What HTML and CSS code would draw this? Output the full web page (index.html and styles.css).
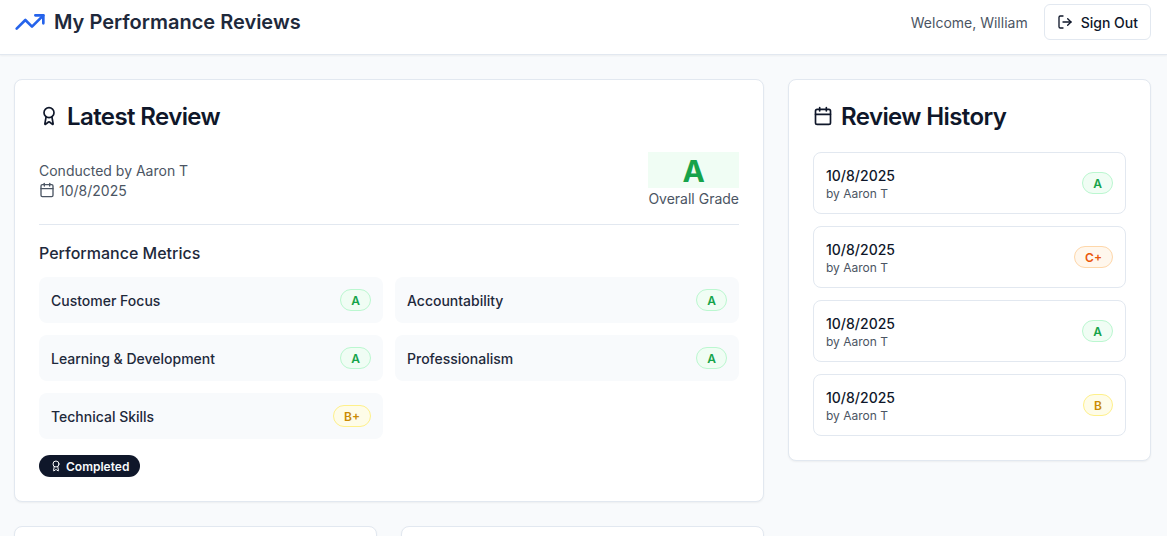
FILE: index.html
```html
<!DOCTYPE html>
<html lang="en">
<head>
<meta charset="utf-8">
<title>My Performance Reviews</title>
<link rel="stylesheet" href="styles.css">
</head>
<body>
<header class="topbar">
  <div class="brand">
    <svg class="ico brand-ico" viewBox="0 0 24 24"><polyline points="22 7 13.5 15.5 8.5 10.5 2 17"/><polyline points="16 7 22 7 22 13"/></svg>
    <h1>My Performance Reviews</h1>
  </div>
  <div class="user">
    <span class="welcome t">Welcome, William</span>
    <button class="signout">
      <svg class="ico i16" viewBox="0 0 24 24"><path d="M9 21H5a2 2 0 0 1-2-2V5a2 2 0 0 1 2-2h4"/><polyline points="16 17 21 12 16 7"/><line x1="21" y1="12" x2="9" y2="12"/></svg>
      <span class="t">Sign Out</span>
    </button>
  </div>
</header>
<main class="layout">
  <div class="primary">
    <section class="card">
      <h2 class="card-title">
        <svg class="ico i20" viewBox="0 0 24 24"><path d="m15.477 12.89 1.515 8.526a.5.5 0 0 1-.81.47l-3.58-2.687a1 1 0 0 0-1.197 0l-3.586 2.686a.5.5 0 0 1-.81-.469l1.514-8.526"/><circle cx="12" cy="8" r="6"/></svg>
        <span class="t">Latest Review</span>
      </h2>
      <div class="summary">
        <div class="meta">
          <div>Conducted by Aaron T</div>
          <div class="meta-date">
            <svg class="ico i16" viewBox="0 0 24 24"><path d="M8 2v4"/><path d="M16 2v4"/><rect x="3" y="4" width="18" height="18" rx="2"/><path d="M3 10h18"/></svg>
            10/8/2025
          </div>
        </div>
        <div class="overall">
          <div class="overall-grade">A</div>
          <div class="overall-label">Overall Grade</div>
        </div>
      </div>
      <h3 class="metrics-title">Performance Metrics</h3>
      <div class="metrics">
        <div class="metric"><span class="t">Customer Focus</span><span class="grade green">A</span></div>
        <div class="metric"><span class="t">Accountability</span><span class="grade green">A</span></div>
        <div class="metric"><span class="t">Learning &amp; Development</span><span class="grade green">A</span></div>
        <div class="metric"><span class="t">Professionalism</span><span class="grade green">A</span></div>
        <div class="metric"><span class="t">Technical Skills</span><span class="grade yellow">B+</span></div>
      </div>
      <span class="status">
        <svg class="ico i12" viewBox="0 0 24 24"><path d="m15.477 12.89 1.515 8.526a.5.5 0 0 1-.81.47l-3.58-2.687a1 1 0 0 0-1.197 0l-3.586 2.686a.5.5 0 0 1-.81-.469l1.514-8.526"/><circle cx="12" cy="8" r="6"/></svg>
        <span class="t">Completed</span>
      </span>
    </section>
    <div class="lower">
      <section class="card card-stub"></section>
      <section class="card card-stub"></section>
    </div>
  </div>
  <aside class="card history">
    <h2 class="card-title">
      <svg class="ico i20" viewBox="0 0 24 24"><path d="M8 2v4"/><path d="M16 2v4"/><rect x="3" y="4" width="18" height="18" rx="2"/><path d="M3 10h18"/></svg>
      <span class="t">Review History</span>
    </h2>
    <div class="history-list">
      <div class="history-item"><div class="t"><div class="h-date">10/8/2025</div><div class="h-by">by Aaron T</div></div><span class="grade green">A</span></div>
      <div class="history-item"><div class="t"><div class="h-date">10/8/2025</div><div class="h-by">by Aaron T</div></div><span class="grade orange">C+</span></div>
      <div class="history-item"><div class="t"><div class="h-date">10/8/2025</div><div class="h-by">by Aaron T</div></div><span class="grade green">A</span></div>
      <div class="history-item"><div class="t"><div class="h-date">10/8/2025</div><div class="h-by">by Aaron T</div></div><span class="grade yellow">B</span></div>
    </div>
  </aside>
</main>
</body>
</html>
```

FILE: styles.css
```css
* { box-sizing: border-box; }
html, body { height: 536px; overflow: hidden; }
body {
  margin: 0;
  background: #f8fafc;
  color: #0f172a;
  font-family: Inter, "Liberation Sans", sans-serif;
  font-size: 14px;
  line-height: 20px;
}
h1, h2, h3 { margin: 0; }
.ico { fill: none; stroke: currentColor; stroke-width: 2; stroke-linecap: round; stroke-linejoin: round; flex: none; display: block; }
.i12 { width: 12px; height: 12px; }
.i16 { width: 16px; height: 16px; }
.i20 { width: 20px; height: 20px; }
.t { padding-top: 2px; }

.topbar {
  height: 55px;
  padding: 4px 16px 14px 14px;
  display: flex;
  justify-content: space-between;
  align-items: center;
  background: #fff;
  border-bottom: 1px solid #e2e8f0;
  box-shadow: 0 1px 2px rgba(0, 0, 0, .05);
}
.brand { display: flex; align-items: center; gap: 8px; }
.brand-ico { width: 32px; height: 32px; color: #2563eb; }
.brand h1 { font-size: 20px; line-height: 28px; font-weight: 600; color: #1e293b; }
.user { display: flex; align-items: center; gap: 16px; }
.welcome { color: #4b5563; }
.signout {
  height: 36px;
  padding: 0 12px;
  display: flex;
  align-items: center;
  gap: 8px;
  font: 500 14px/20px Inter, "Liberation Sans", sans-serif;
  color: #0f172a;
  background: #fff;
  border: 1px solid #e2e8f0;
  border-radius: 6px;
}

.layout {
  padding: 24px 16px 0 14px;
  display: grid;
  grid-template-columns: 750px 363px;
  gap: 24px;
  align-items: start;
}
.primary { display: flex; flex-direction: column; gap: 24px; }
.lower { display: grid; grid-template-columns: 363px 363px; gap: 24px; }
.card {
  background: #fff;
  border: 1px solid #e2e8f0;
  border-radius: 8px;
  box-shadow: 0 1px 2px rgba(0, 0, 0, .05);
  padding: 24px;
}
.card-stub { height: 200px; }
.card-title {
  display: flex;
  align-items: center;
  gap: 8px;
  height: 24px;
  font-size: 24px;
  line-height: 24px;
  font-weight: 600;
  letter-spacing: -.6px;
  margin-bottom: 24px;
}

.summary {
  display: flex;
  justify-content: space-between;
  align-items: flex-start;
  padding-bottom: 14px;
  border-bottom: 1px solid #e2e8f0;
  margin-bottom: 16px;
}
.meta { color: #4b5563; padding-top: 9px; }
.meta-date { display: flex; align-items: flex-start; gap: 4px; }
.meta-date .ico { margin-top: 1px; }
.overall { text-align: center; }
.overall-grade {
  background: #f0fdf4;
  color: #16a34a;
  padding-top: 2px;
  font-size: 30px;
  line-height: 34px;
  font-weight: 700;
}
.overall-label { color: #4b5563; line-height: 22px; }

.metrics-title { font-size: 16px; line-height: 24px; font-weight: 500; color: #1e293b; margin-bottom: 12px; }
.metrics { display: grid; grid-template-columns: 1fr 1fr; gap: 12px; margin-bottom: 16px; }
.metric {
  height: 46px;
  padding: 0 12px;
  display: flex;
  align-items: center;
  justify-content: space-between;
  background: #f8fafc;
  border-radius: 8px;
  font-weight: 500;
  color: #1e293b;
}
.grade {
  display: inline-block;
  padding: 2px 10px 0;
  border: 1px solid;
  border-radius: 9999px;
  font-size: 12px;
  line-height: 18px;
  font-weight: 600;
}
.green { color: #16a34a; background: #f0fdf4; border-color: #bbf7d0; }
.yellow { color: #ca8a04; background: #fefce8; border-color: #fef08a; }
.orange { color: #ea580c; background: #fff7ed; border-color: #fed7aa; }

.status {
  display: inline-flex;
  align-items: center;
  gap: 4px;
  height: 22px;
  padding: 0 11px;
  background: #0f172a;
  color: #f8fafc;
  border-radius: 9999px;
  font-size: 12px;
  line-height: 16px;
  font-weight: 600;
  vertical-align: top;
}

.history-list { display: flex; flex-direction: column; gap: 12px; }
.history-item {
  height: 62px;
  padding: 0 12px;
  display: flex;
  align-items: center;
  justify-content: space-between;
  border: 1px solid #e2e8f0;
  border-radius: 8px;
}
.h-date { font-weight: 500; }
.h-by { font-size: 12px; line-height: 16px; color: #4b5563; }
```
